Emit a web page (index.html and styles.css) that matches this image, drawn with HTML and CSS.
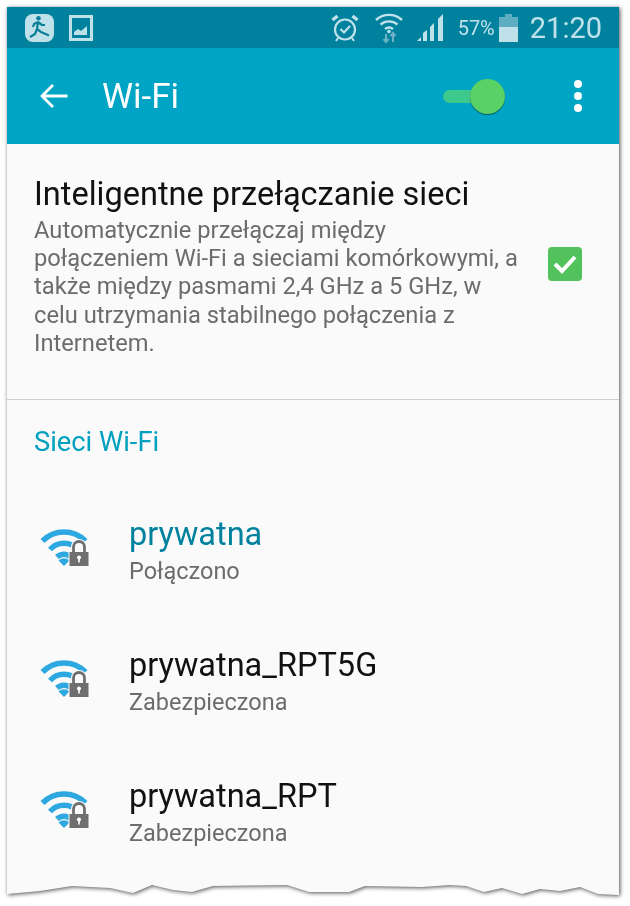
FILE: index.html
```html
<!DOCTYPE HTML>
<html>
<head>
    <meta charset="utf-8">
    <title>Wi-Fi</title>
    <link rel="stylesheet" href="styles.css">
</head>
<body>
    <div class="shadow">
        <div class="phone">
            <div class="status">
                <svg class="app-run" width="29" height="28" viewBox="0 0 29 28">
                    <rect width="29" height="28" rx="8" fill="#bfe2ea"/>
                    <circle cx="13.500" cy="4.300" r="2.300" fill="#0a7f99"/>
                    <path d="M13 8l-1 7 4 3 8 3.500M12 15l-2 5-5 3M13 8l-4 2-1 3M13 8l4 3 3 0" fill="none" stroke="#0a7f99" stroke-width="2.200" stroke-linejoin="round"/>
                </svg>
                <svg class="app-pic" width="24" height="26" viewBox="0 0 24 26">
                    <rect x="1.500" y="1.500" width="21" height="23" fill="none" stroke="#bfe2ea" stroke-width="3"/>
                    <path d="M5 20v-3l4-3 3 2 6-5v9z" fill="#bfe2ea"/>
                </svg>
                <div class="status-right">
                    <svg class="st-alarm" width="28" height="28" viewBox="0 0 28 28" fill="none" stroke="#bfe2ea">
                        <circle cx="14" cy="15.500" r="10" stroke-width="2.200"/>
                        <path d="M9.500 15l3.500 3.500 6-6.500" stroke-width="2.200"/>
                        <path d="M1.500 6l5-4M26.500 6l-5-4" stroke-width="3.500"/>
                        <path d="M7 24l-2 3M21 24l2 3" stroke-width="2"/>
                    </svg>
                    <svg class="st-wifi" width="28" height="30" viewBox="0 0 28 30">
                        <g fill="none" stroke="#bfe2ea" stroke-width="2.400">
                            <path d="M1 7a19 19 0 0 1 26 0"/>
                            <path d="M5.500 11.500a13 13 0 0 1 17 0"/>
                            <path d="M10 16a6.500 6.500 0 0 1 8 0"/>
                        </g>
                        <circle cx="14" cy="18.500" r="1.800" fill="#bfe2ea"/>
                        <path d="M11 21v8M8.500 26l2.500 3 2.500-3" fill="none" stroke="#6fb2c3" stroke-width="2"/>
                        <path d="M18 29v-9M15.500 23l2.500-3 2.500 3" fill="none" stroke="#6fb2c3" stroke-width="2"/>
                    </svg>
                    <svg class="st-signal" width="27" height="28" viewBox="0 0 27 28" fill="#bfe2ea">
                        <path d="M0 27l4-4v4z"/>
                        <path d="M6 27v-8l4-3v11z"/>
                        <path d="M13 27v-14l4-4v18z"/>
                        <path d="M21 27v-22l5-5v27z"/>
                    </svg>
                    <span class="st-pct">57%</span>
                    <svg class="st-batt" width="19" height="28" viewBox="0 0 19 28">
                        <rect x="6" width="7" height="3" fill="#5fadc0"/>
                        <rect y="3" width="19" height="10" fill="#5fadc0"/>
                        <rect y="13" width="19" height="15" fill="#bfe2ea"/>
                    </svg>
                    <span class="st-time">21:20</span>
                </div>
            </div>

            <div class="appbar">
                <svg class="back" width="28" height="26" viewBox="0 0 28 26" fill="none" stroke="#fff" stroke-width="2.800">
                    <path d="M1.500 13h26M13 2l-11 11 11 11"/>
                </svg>
                <span class="appbar-title">Wi-Fi</span>
                <div class="toggle"><span class="toggle-knob"></span></div>
                <div class="more"><i></i><i></i><i></i></div>
            </div>

            <div class="smart">
                <div class="smart-text">
                    <div class="smart-title">Inteligentne przełączanie sieci</div>
                    <div class="smart-desc">Automatycznie przełączaj między<br>połączeniem Wi-Fi a sieciami komórkowymi, a<br>także między pasmami 2,4 GHz a 5 GHz, w<br>celu utrzymania stabilnego połączenia z<br>Internetem.</div>
                </div>
                <div class="check">
                    <svg width="26" height="22" viewBox="0 0 26 22" fill="none" stroke="#fff" stroke-width="4">
                        <path d="M3 11l7 7 13-14"/>
                    </svg>
                </div>
            </div>

            <div class="section">Sieci Wi-Fi</div>

            <div class="net">
                <svg class="net-icon" width="50" height="38" viewBox="0 0 50 38">
                    <use href="#wifi-lock"/>
                </svg>
                <div class="net-text">
                    <div class="net-name net-on">prywatna</div>
                    <div class="net-sub">Połączono</div>
                </div>
            </div>
            <div class="net">
                <svg class="net-icon" width="50" height="38" viewBox="0 0 50 38">
                    <use href="#wifi-lock"/>
                </svg>
                <div class="net-text">
                    <div class="net-name">prywatna_RPT5G</div>
                    <div class="net-sub">Zabezpieczona</div>
                </div>
            </div>
            <div class="net">
                <svg class="net-icon" width="50" height="38" viewBox="0 0 50 38">
                    <use href="#wifi-lock"/>
                </svg>
                <div class="net-text">
                    <div class="net-name">prywatna_RPT</div>
                    <div class="net-sub">Zabezpieczona</div>
                </div>
            </div>
        </div>
    </div>

    <svg class="defs" width="0" height="0">
        <defs>
            <g id="wifi-lock">
                <g fill="none" stroke="#2ea8e0" stroke-width="5.500">
                    <path d="M2.500 12a30 30 0 0 1 43 0"/>
                    <path d="M10 20.500a19 19 0 0 1 28 0"/>
                    <path d="M17 28a10 10 0 0 1 14 0"/>
                </g>
                <path d="M24 37l-5.500-5.500a8 8 0 0 1 11 0z" fill="#2ea8e0"/>
                <path d="M33.500 23v-5a5.500 5.500 0 0 1 11 0v5" fill="#fafafa" stroke="#fafafa" stroke-width="5"/>
                <path d="M28.500 22.500h21v15.500h-21z" fill="#fafafa"/>
                <path d="M33.500 23v-5a5.500 5.500 0 0 1 11 0v5" fill="none" stroke="#6f6f6f" stroke-width="2.800"/>
                <rect x="29.500" y="23" width="19" height="14" fill="#6f6f6f"/>
                <circle cx="39" cy="28.500" r="2" fill="#fff"/>
                <rect x="38.200" y="29" width="1.600" height="4.500" fill="#fff"/>
            </g>
        </defs>
    </svg>
</body>
</html>
```

FILE: styles.css
```css
html, body {
    margin: 0;
    background: #fff;
}

body {
    width: 630px;
    height: 906px;
    overflow: hidden;
    font-family: Roboto, "Noto Sans", sans-serif;
}

.defs {
    display: block;
}

.shadow {
    margin: 7px 0 0 7px;
    width: 612px;
    filter: drop-shadow(1px 1px 2px rgba(0, 0, 0, 0.7));
}

.phone {
    height: 889px;
    background: #fafafa;
    clip-path: polygon(0 0, 612px 0, 612px 888px, 591px 887px, 573px 880px, 553px 884px, 533px 882px, 515px 887px, 495px 881px, 477px 885px, 459px 879px, 443px 878px, 415px 880px, 358px 879px, 342px 885px, 302px 885px, 280px 878px, 206px 879px, 185px 885px, 166px 883px, 145px 878px, 126px 886px, 103px 881px, 65px 879px, 33px 884px, 0 887px);
}

/* status bar */
.status {
    height: 41px;
    background: #00829e;
    display: flex;
    align-items: center;
    padding: 0 17px 0 18px;
}

.app-run {
    margin-right: 15px;
}

.status-right {
    margin-left: auto;
    display: flex;
    align-items: center;
    color: #bfe2ea;
}

.st-alarm {
    margin-right: 16px;
}

.st-wifi {
    margin-right: 14px;
}

.st-signal {
    margin-right: 14px;
}

.st-pct {
    font-size: 20px;
    margin-right: 4px;
}

.st-time {
    font-size: 29px;
    margin-left: 12px;
}

/* action bar */
.appbar {
    height: 96px;
    background: #00a5c6;
    display: flex;
    align-items: center;
    color: #fff;
    padding-left: 33px;
}

.back {
    margin-right: 34px;
}

.appbar-title {
    font-size: 35px;
}

.toggle {
    margin-left: auto;
    width: 62px;
    height: 13px;
    border-radius: 7px;
    background: #3ec98c;
    position: relative;
}

.toggle-knob {
    position: absolute;
    right: 0;
    top: -11px;
    width: 35px;
    height: 35px;
    border-radius: 50%;
    background: #5ad165;
    box-shadow: 0 1px 1px rgba(0, 60, 60, 0.7);
}

.more {
    margin: 0 37px 0 69px;
    display: flex;
    flex-direction: column;
    gap: 4px;
}

.more i {
    display: block;
    width: 8px;
    height: 8px;
    border-radius: 50%;
    background: #fff;
}

/* smart network switch */
.smart {
    height: 256px;
    box-sizing: border-box;
    padding: 29px 37px 0 27px;
    display: flex;
    justify-content: space-between;
    border-bottom: 1px solid #cfcfcf;
}

.smart-title {
    font-size: 32.5px;
    line-height: 43px;
    color: #111;
}

.smart-desc {
    font-size: 23.700px;
    line-height: 28.200px;
    color: #6c6c6c;
}

.check {
    width: 34px;
    height: 34px;
    margin-top: 74px;
    border-radius: 4px;
    background: #52c25d;
    display: flex;
    align-items: center;
    justify-content: center;
}

/* networks */
.section {
    font-size: 27.300px;
    line-height: 30px;
    color: #00a0bf;
    padding: 27px 0 0 27px;
    height: 53px;
}

.net {
    height: 131px;
    display: flex;
    align-items: center;
    padding-left: 33px;
}

.net-icon {
    margin: 4px 39px 0 0;
    flex: none;
}

.net-text {
    margin-top: 15px;
}

.net-name {
    font-size: 32.5px;
    line-height: 37px;
    color: #111;
}

.net-on {
    color: #00829e;
}

.net-sub {
    font-size: 23.500px;
    line-height: 37px;
    color: #6c6c6c;
}
```
